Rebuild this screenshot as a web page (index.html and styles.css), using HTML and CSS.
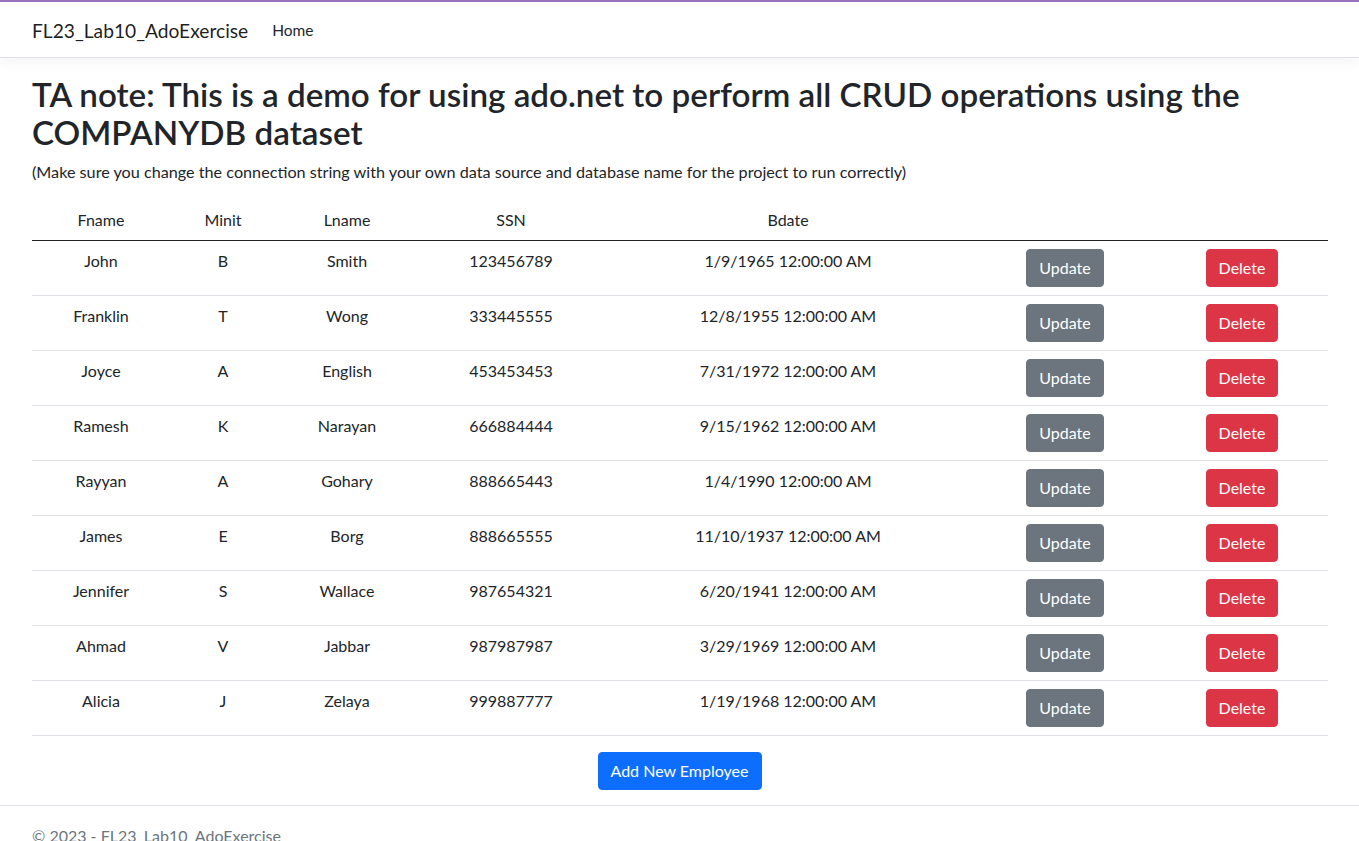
FILE: index.html
```html
<!DOCTYPE html>
<html lang="en">
<head>
<meta charset="utf-8">
<title>FL23_Lab10_AdoExercise</title>
<link rel="stylesheet" href="styles.css">
</head>
<body>
<header>
  <nav class="navbar">
    <a class="brand" href="#">FL23_Lab10_AdoExercise</a>
    <a class="nav-link" href="#">Home</a>
  </nav>
</header>
<main class="container">
  <h2 class="title">TA note: This is a demo for using ado.net to perform all CRUD operations using the COMPANYDB dataset</h2>
  <p class="note">(Make sure you change the connection string with your own data source and database name for the project to run correctly)</p>
  <table class="table">
    <colgroup>
      <col class="c1"><col class="c2"><col class="c3"><col class="c4"><col class="c5"><col class="c6"><col class="c7">
    </colgroup>
    <thead>
      <tr><th>Fname</th><th>Minit</th><th>Lname</th><th>SSN</th><th>Bdate</th><th></th><th></th></tr>
    </thead>
    <tbody>
      <tr><td>John</td><td>B</td><td>Smith</td><td>123456789</td><td>1/9/1965 12:00:00 AM</td><td><button class="btn btn-secondary">Update</button></td><td><button class="btn btn-danger">Delete</button></td></tr>
      <tr><td>Franklin</td><td>T</td><td>Wong</td><td>333445555</td><td>12/8/1955 12:00:00 AM</td><td><button class="btn btn-secondary">Update</button></td><td><button class="btn btn-danger">Delete</button></td></tr>
      <tr><td>Joyce</td><td>A</td><td>English</td><td>453453453</td><td>7/31/1972 12:00:00 AM</td><td><button class="btn btn-secondary">Update</button></td><td><button class="btn btn-danger">Delete</button></td></tr>
      <tr><td>Ramesh</td><td>K</td><td>Narayan</td><td>666884444</td><td>9/15/1962 12:00:00 AM</td><td><button class="btn btn-secondary">Update</button></td><td><button class="btn btn-danger">Delete</button></td></tr>
      <tr><td>Rayyan</td><td>A</td><td>Gohary</td><td>888665443</td><td>1/4/1990 12:00:00 AM</td><td><button class="btn btn-secondary">Update</button></td><td><button class="btn btn-danger">Delete</button></td></tr>
      <tr><td>James</td><td>E</td><td>Borg</td><td>888665555</td><td>11/10/1937 12:00:00 AM</td><td><button class="btn btn-secondary">Update</button></td><td><button class="btn btn-danger">Delete</button></td></tr>
      <tr><td>Jennifer</td><td>S</td><td>Wallace</td><td>987654321</td><td>6/20/1941 12:00:00 AM</td><td><button class="btn btn-secondary">Update</button></td><td><button class="btn btn-danger">Delete</button></td></tr>
      <tr><td>Ahmad</td><td>V</td><td>Jabbar</td><td>987987987</td><td>3/29/1969 12:00:00 AM</td><td><button class="btn btn-secondary">Update</button></td><td><button class="btn btn-danger">Delete</button></td></tr>
      <tr><td>Alicia</td><td>J</td><td>Zelaya</td><td>999887777</td><td>1/19/1968 12:00:00 AM</td><td><button class="btn btn-secondary">Update</button></td><td><button class="btn btn-danger">Delete</button></td></tr>
    </tbody>
  </table>
  <div class="actions">
    <button class="btn btn-primary">Add New Employee</button>
  </div>
</main>
<footer class="footer">
  <div class="footer-inner">&copy; 2023 - FL23_Lab10_AdoExercise</div>
</footer>
</body>
</html>
```
FILE: styles.css
```css
* { box-sizing: border-box; }
html, body { margin: 0; padding: 0; }
body {
  font-family: Lato, "Liberation Sans", sans-serif;
  font-size: 16px;
  line-height: 1.5;
  color: #212529;
  background: #fff;
  overflow: hidden;
  height: 841px;
}
a { text-decoration: none; }

.navbar {
  display: flex;
  align-items: center;
  height: 58px;
  border-top: 2px solid #9a72bd;
  border-bottom: 1px solid #dee2e6;
  box-shadow: 0 4px 12px rgba(0, 0, 0, 0.05);
  padding: 0 32px;
  background: #fff;
}
.brand {
  font-size: 19.2px;
  color: rgba(0, 0, 0, 0.9);
  margin-right: 24px;
  line-height: 30px;
  padding-top: 2px;
}
.nav-link {
  font-size: 15.5px;
  color: #212529;
  padding-top: 2px;
}

.container {
  padding: 17px 32px 15px;
}
.title {
  font-size: 33.2px;
  font-weight: 600;
  line-height: 38.4px;
  margin: 0 0 8px;
  color: #212529;
}
.note {
  margin: 0 0 16px;
  font-size: 16.2px;
}

.table {
  width: 1296px;
  border-collapse: collapse;
  margin-bottom: 16px;
  table-layout: fixed;
}
.c1 { width: 138px; }
.c2 { width: 106px; }
.c3 { width: 142px; }
.c4 { width: 186px; }
.c5 { width: 368px; }
.c6 { width: 186px; }
.c7 { width: 170px; }
.table th, .table td {
  text-align: center;
  vertical-align: top;
  padding: 8px;
  font-weight: 400;
}
.table thead th {
  border-bottom: 1px solid #212529;
}
.table tbody td {
  border-bottom: 1px solid #dee2e6;
}
.table td:last-child {
  padding-right: 10px;
}

.btn {
  font-family: inherit;
  font-size: 16px;
  line-height: 24px;
  padding: 6px 12px;
  border: 1px solid transparent;
  border-radius: 4px;
  color: #fff;
  cursor: pointer;
}
.btn-secondary { background: #6c757d; border-color: #6c757d; }
.btn-danger { background: #dc3545; border-color: #dc3545; }
.btn-primary { background: #0d6efd; border-color: #0d6efd; }

.actions {
  display: flex;
  justify-content: center;
}

.footer {
  border-top: 1px solid #dee2e6;
  height: 60px;
  line-height: 60px;
  color: #6c757d;
  white-space: nowrap;
}
.footer-inner {
  padding: 0 32px;
}
```
